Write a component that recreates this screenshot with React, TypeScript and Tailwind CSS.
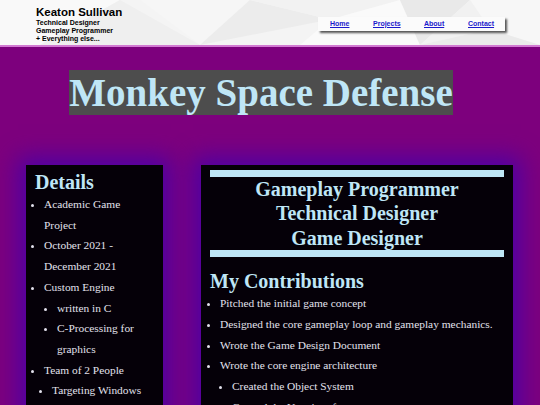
import React from "react";

const serif = { fontFamily: '"Liberation Serif", "Times New Roman", serif' };
const sans = { fontFamily: '"Liberation Sans", Arial, sans-serif' };

function HeaderPattern() {
  return (
    <svg className="absolute inset-0 w-full h-full" viewBox="0 0 540 46" preserveAspectRatio="none">
      <rect width="540" height="46" fill="#f4f4f4" />
      <polygon points="0,0 120,0 40,46 0,46" fill="#f9f9f9" />
      <polygon points="120,0 200,46 40,46" fill="#efefef" />
      <polygon points="140,0 250,0 200,46" fill="#f6f6f6" />
      <polygon points="250,0 330,20 200,46" fill="#ececec" />
      <polygon points="250,0 400,0 330,20" fill="#f2f2f2" />
      <polygon points="330,20 400,0 420,46 300,46" fill="#fafafa" />
      <polygon points="400,0 470,0 420,46" fill="#e9e9e9" />
      <polygon points="470,0 540,0 540,46 490,30" fill="#f7f7f7" />
      <polygon points="470,0 490,30 420,46" fill="#f1f1f1" />
      <polygon points="490,30 540,46 420,46" fill="#ebebeb" />
    </svg>
  );
}

export default function App() {
  return (
    <div className="w-[540px] h-[405px] overflow-hidden bg-[#7d007d]" style={serif}>
      <header className="relative h-[47px] border-b-2 border-[#d27ad2]">
        <HeaderPattern />
        <div className="relative flex items-start justify-between pl-[36px] pr-[35px]" style={sans}>
          <div className="pt-[6px] text-black">
            <div className="text-[11.5px] font-bold leading-[13px]">Keaton Sullivan</div>
            <div className="text-[7px] font-bold leading-[7.8px]">Technical Designer</div>
            <div className="text-[7px] font-bold leading-[7.8px]">Gameplay Programmer</div>
            <div className="text-[7px] font-bold leading-[7.8px]">+ Everything else...</div>
          </div>
          <nav className="mt-[17px] flex h-[14px] w-[187px] items-center bg-[#fbfbfb] pl-[12px] text-[7px] font-bold shadow-[2px_2px_2px_#555]">
            <a href="#" className="w-[43px] text-[#1a1acc] underline">Home</a>
            <a href="#" className="w-[51px] text-[#1a1acc] underline">Projects</a>
            <a href="#" className="w-[44px] text-[#1a1acc] underline">About</a>
            <a href="#" className="text-[#1a1acc] underline">Contact</a>
          </nav>
        </div>
      </header>

      <div className="flex justify-center pr-[18px] pt-[23px]">
        <h1 className="bg-[#4d4d4d] text-[39px] font-bold leading-[45px] text-[#bfe6f6]">Monkey Space Defense</h1>
      </div>

      <div className="mt-[50px] flex items-start pl-[26px]">
        <aside className="w-[137px] h-[260px] bg-[#050008] px-[9px] pt-[5px] text-[11.4px] leading-[20.7px] text-[#e2e0ec] shadow-[0_0_22px_8px_#4e00a4]">
          <h2 className="text-[20px] font-bold leading-[24px] text-[#bfe6f6]">Details</h2>
          <ul className="list-disc pl-[9px]">
            <li>Academic Game Project</li>
            <li>October 2021 - December 2021</li>
            <li>
              Custom Engine
              <ul className="list-disc pl-[13px]">
                <li>written in C</li>
                <li>C-Processing for graphics</li>
              </ul>
            </li>
            <li>Team of 2 People</li>
            <li className="ml-[8px]">Targeting Windows</li>
          </ul>
        </aside>

        <main className="ml-[38px] w-[312px] h-[260px] bg-[#050008] px-[9px] pt-[5px] text-[11.4px] leading-[20.7px] text-[#e2e0ec] shadow-[0_0_22px_8px_#4e00a4]">
          <div className="h-[7px] bg-[#bfe6f6]" />
          <div className="text-center text-[20px] font-bold leading-[24.4px] text-[#bfe6f6]">
            <div>Gameplay Programmer</div>
            <div>Technical Designer</div>
            <div>Game Designer</div>
          </div>
          <div className="h-[7px] bg-[#bfe6f6]" />
          <h2 className="mt-[12px] text-[20px] font-bold leading-[24px] text-[#bfe6f6]">My Contributions</h2>
          <ul className="list-disc pl-[10px]">
            <li>Pitched the initial game concept</li>
            <li>Designed the core gameplay loop and gameplay mechanics.</li>
            <li>Wrote the Game Design Document</li>
            <li>
              Wrote the core engine architecture
              <ul className="list-disc pl-[12px]">
                <li>Created the Object System</li>
                <li>Created the User interface</li>
              </ul>
            </li>
          </ul>
        </main>
      </div>
    </div>
  );
}
